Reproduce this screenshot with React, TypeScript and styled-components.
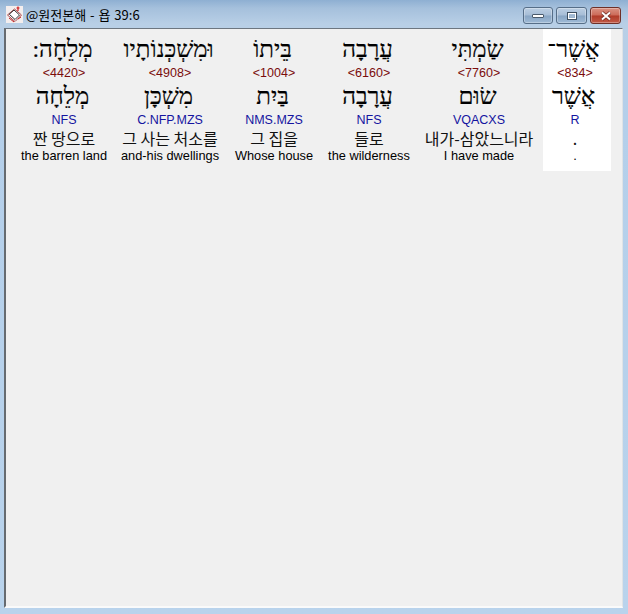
import React from "react";
import styled, { createGlobalStyle } from "styled-components";

const GlobalStyle = createGlobalStyle`
  html, body { margin: 0; padding: 0; background: #b9d3ec; }
  body { font-family: "Liberation Sans", Arial, sans-serif; }
`;

const Frame = styled.div`
  width: 628px;
  height: 614px;
  box-sizing: border-box;
  display: flex;
  flex-direction: column;
  padding: 0 5px 6px 4px;
  background: linear-gradient(180deg, #8eafd2 0, #a5c0dc 8px, #b8cfe6 24px, #b4cfea 120px, #b9d3ec 100%);
  overflow: hidden;
`;

const TitleBar = styled.div`
  height: 28px;
  flex: none;
  display: flex;
  align-items: center;
  gap: 3px;
  padding-top: 1px;
  box-sizing: border-box;
`;

const AppIcon = styled.svg`
  width: 17px;
  height: 17px;
  margin-left: 2px;
  flex: none;
`;

const Caption = styled.span`
  font-family: "Noto Sans CJK KR", "Liberation Sans", sans-serif;
  font-size: 13px;
  word-spacing: 1px;
  color: #000;
  white-space: pre;
  flex: 1;
`;

const Controls = styled.div`
  display: flex;
  gap: 3px;
  margin: 2px 2px 0 0;
`;

const ControlButton = styled.div<{ $close?: boolean; $width: number }>`
  width: ${(p) => p.$width}px;
  height: 17px;
  box-sizing: border-box;
  border: 1px solid ${(p) => (p.$close ? "#6e3028" : "#566e88")};
  border-radius: 3px;
  display: flex;
  align-items: center;
  justify-content: center;
  box-shadow: inset 0 0 0 1px rgba(255, 255, 255, 0.3);
  background: ${(p) =>
    p.$close
      ? "linear-gradient(180deg, #d99384 0, #cc6a58 48%, #b03a28 52%, #c25a46 100%)"
      : "linear-gradient(180deg, #bccfe3 0, #a6bdd6 48%, #88a5c4 52%, #9fbad6 100%)"};
`;

const Client = styled.main`
  flex: 1;
  box-sizing: border-box;
  background: #f0f0f0;
  border-top: 1px solid #6d7680;
  border-left: 2px solid #666b70;
  border-right: 1px solid #dfe3e6;
  border-bottom: 2px solid #fafafa;
  padding: 0 11px 0 13px;
  display: flex;
  flex-direction: row-reverse;
  align-items: flex-start;
`;

const Column = styled.section<{ $width: number; $inset?: number; $selected?: boolean }>`
  width: ${(p) => p.$width}px;
  padding-right: ${(p) => p.$inset ?? 0}px;
  box-sizing: border-box;
  flex: none;
  height: 142px;
  display: flex;
  flex-direction: column;
  align-items: center;
  background: ${(p) => (p.$selected ? "#ffffff" : "transparent")};
  white-space: nowrap;
`;

const Hebrew = styled.div<{ $top: number }>`
  font-family: "Liberation Serif", "DejaVu Serif", serif;
  font-size: 24px;
  line-height: 30px;
  height: 30px;
  margin-top: ${(p) => p.$top}px;
  margin-right: 3px;
  color: #000;
  direction: rtl;
  -webkit-text-stroke: 0.2px #000;
`;

const Maqaf = styled.span`
  font-family: "DejaVu Sans", sans-serif;
  -webkit-text-stroke: 0;
`;

const Strong = styled.div`
  font-size: 12.5px;
  line-height: 16px;
  height: 16px;
  margin-top: 1px;
  color: #7a0c0c;
`;

const Morph = styled.div`
  font-size: 12.5px;
  line-height: 16px;
  height: 16px;
  margin-top: 1px;
  color: #1414a0;
`;

const Korean = styled.div`
  font-family: "Noto Sans CJK KR", sans-serif;
  font-size: 16px;
  line-height: 18px;
  height: 18px;
  margin-top: 1px;
  color: #111;
`;

const English = styled.div`
  font-size: 12.8px;
  line-height: 14px;
  height: 14px;
  margin-top: 2px;
  color: #000;
`;

type Word = {
  width: number;
  inset?: number;
  surface: string;
  maqaf?: boolean;
  strong: string;
  lemma: string;
  morph: string;
  korean: string;
  english: string;
  selected?: boolean;
};

const words: Word[] = [
  { width: 68, inset: 4, surface: "אֲשֶׁר", maqaf: true, strong: "<834>", lemma: "אֲשֶׁר", morph: "R", korean: ".", english: ".", selected: true },
  { width: 122, inset: 6, surface: "שַׂמְתִּי", strong: "<7760>", lemma: "שׂוּם", morph: "VQACXS", korean: "내가-삼았느니라", english: "I have made" },
  { width: 104, surface: "עֲרָבָה", strong: "<6160>", lemma: "עֲרָבָה", morph: "NFS", korean: "들로", english: "the wilderness" },
  { width: 86, surface: "בֵּיתוֹ", strong: "<1004>", lemma: "בַּיִת", morph: "NMS.MZS", korean: "그 집을", english: "Whose house" },
  { width: 122, surface: "וּמִשְׁכְּנוֹתָיו", strong: "<4908>", lemma: "מִשְׁכָּן", morph: "C.NFP.MZS", korean: "그 사는 처소를", english: "and-his dwellings" },
  { width: 90, surface: "מְלֵחָה:", strong: "<4420>", lemma: "מְלֵחָה", morph: "NFS", korean: "짠 땅으로", english: "the barren land" },
];

export default function App() {
  return (
    <>
      <GlobalStyle />
      <Frame>
        <TitleBar>
          <AppIcon viewBox="0 0 17 17">
            <rect width="17" height="17" fill="#f4eeee" />
            <path d="M8.5 3 L15.5 9 L9 15.5 L1.5 9 Z" fill="#fff" stroke="#a8474a" strokeWidth="1" />
            <path d="M3 8.5 L8 4 M8 4 L13.5 9 L9 13.5 L3.5 8.5" fill="none" stroke="#333" strokeWidth="1" />
            <path d="M12 0.5 V5 M10.5 2 H13.5" stroke="#d01818" strokeWidth="1.2" />
            <path d="M3 12 L8 16 M12 13 L15 11" stroke="#c02020" strokeWidth="1" />
          </AppIcon>
          <Caption>@원전본해 - 욥 39:6</Caption>
          <Controls>
            <ControlButton $width={30}>
              <svg width="14" height="6" viewBox="0 0 14 6">
                <rect x="1.5" y="1.5" width="11" height="3" rx="0.5" fill="#fff" stroke="#4a5a6c" />
              </svg>
            </ControlButton>
            <ControlButton $width={31}>
              <svg width="12" height="10" viewBox="0 0 12 10">
                <rect x="1.5" y="1.5" width="9" height="7" fill="none" stroke="#3f4f60" />
                <rect x="2.5" y="2.5" width="7" height="5" fill="none" stroke="#fff" />
                <rect x="3.5" y="4.5" width="5" height="2" fill="#a7bdd4" />
              </svg>
            </ControlButton>
            <ControlButton $close $width={31}>
              <svg width="14" height="10" viewBox="0 0 14 10">
                <path d="M3 1.5 L11 8.5 M11 1.5 L3 8.5" stroke="#6b2a22" strokeWidth="3.4" />
                <path d="M3 1.5 L11 8.5 M11 1.5 L3 8.5" stroke="#fff" strokeWidth="2" />
              </svg>
            </ControlButton>
          </Controls>
        </TitleBar>
        <Client>
          {words.map((w) => (
            <Column key={w.strong} $width={w.width} $inset={w.inset} $selected={w.selected}>
              <Hebrew $top={5}>
                {w.surface}
                {w.maqaf && <Maqaf>־</Maqaf>}
              </Hebrew>
              <Strong>{w.strong}</Strong>
              <Hebrew $top={0}>{w.lemma}</Hebrew>
              <Morph>{w.morph}</Morph>
              <Korean>{w.korean}</Korean>
              <English>{w.english}</English>
            </Column>
          ))}
        </Client>
      </Frame>
    </>
  );
}
